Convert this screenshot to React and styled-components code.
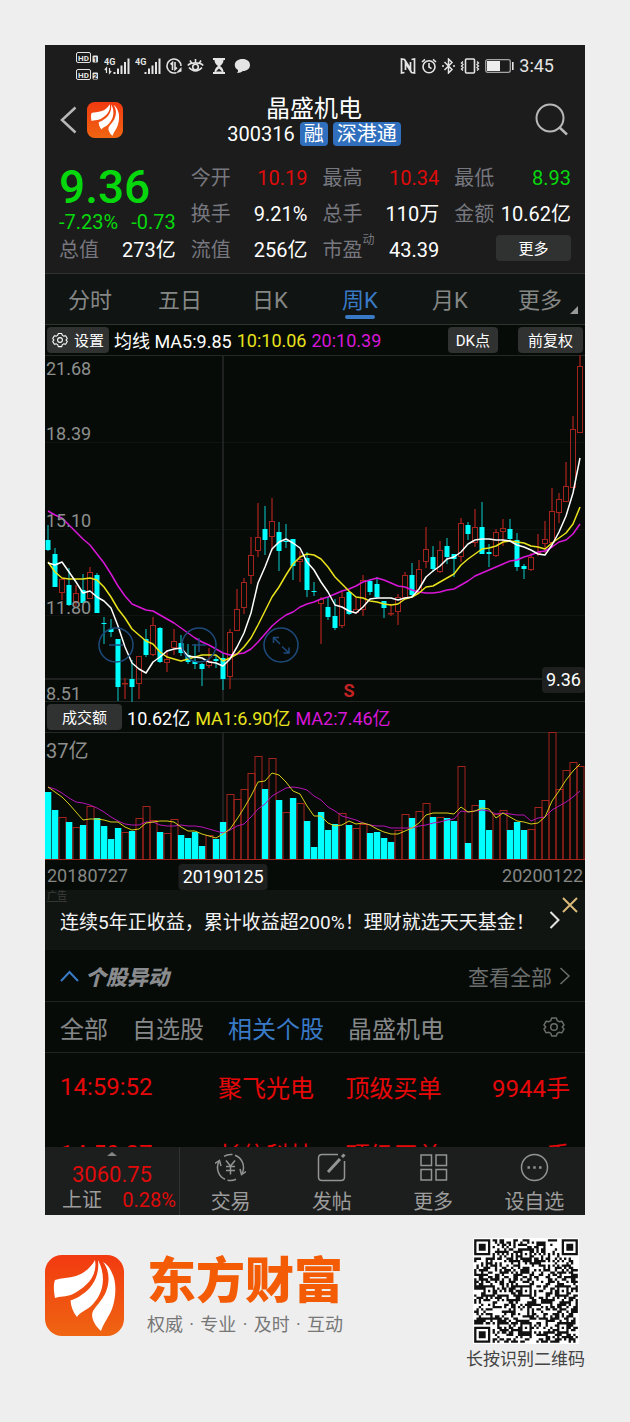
import React from "react";
import styled, { createGlobalStyle } from "styled-components";

const GlobalStyle = createGlobalStyle`
  * {
    box-sizing: border-box;
  }

  body {
    margin: 0;
    background: #eeeeee;
    font-family: Roboto, "Noto Sans CJK SC", sans-serif;
  }

  button {
    padding: 0;
    border: none;
    background: none;
    color: inherit;
    font-family: inherit;
    cursor: pointer;
  }

  a {
    color: inherit;
    text-decoration: none;
  }

  svg {
    display: block;
    flex: none;
  }
`;

const RED = "#df0b0b";
const GREEN = "#07d80d";
const YELLOW = "#e8e21c";
const MAGENTA = "#d816d8";
const BLUE = "#397ac6";
const UP = "#8f1e19";

const Page = styled.main`
  padding: 45px 45px 0;
`;

const Phone = styled.section`
  background: #070b08;
  color: #ffffff;
  overflow: hidden;
`;

/* ---------- top ---------- */

const StatusBar = styled.div`
  display: flex;
  justify-content: space-between;
  align-items: center;
  height: 41px;
  padding: 0 31px;
  background: #1b1c1b;
  color: #e4e4e4;
  font-size: 18px;
`;

const StatusGroup = styled.div`
  display: flex;
  align-items: center;
  gap: 5px;
`;

const Header = styled.header`
  display: grid;
  grid-template-columns: 1fr auto 1fr;
  align-items: center;
  height: 69px;
  padding: 0 17px 2px 15px;
  background: #1b1c1b;
`;

const HeaderLeft = styled.div`
  display: flex;
  align-items: center;
  gap: 10px;
`;

const TitleBlock = styled.div`
  padding-top: 2px;
  text-align: center;
`;

const Title = styled.h1`
  margin: 0;
  font-size: 24px;
  line-height: 26px;
  font-weight: 400;
`;

const CodeRow = styled.div`
  display: flex;
  align-items: center;
  gap: 5px;
  font-size: 20px;
  line-height: 24px;
`;

const Badge = styled.span`
  padding: 0 4px;
  border-radius: 4px;
  background: #2f6fbe;
`;

const SearchButton = styled.button`
  justify-self: end;
`;

/* ---------- quote ---------- */

const Quote = styled.section`
  display: grid;
  grid-template-columns: 1fr 1fr 1fr 1fr;
  column-gap: 15px;
  padding: 5px 14px;
  border-bottom: 1px solid #303230;
  background: #1b1c1b;
  font-size: 20px;
`;

const QuoteColumn = styled.div`
  display: flex;
  flex-direction: column;
`;

const MainColumn = styled(QuoteColumn)`
  padding-top: 4px;
`;

const Price = styled.strong`
  color: ${GREEN};
  font-size: 46px;
  line-height: 47px;
  font-weight: 500;
`;

const Change = styled.div`
  display: flex;
  justify-content: space-between;
  color: ${GREEN};
  line-height: 22px;
  white-space: nowrap;
`;

const Stat = styled.div`
  display: flex;
  justify-content: space-between;
  line-height: ${(props) => props.$height || 36}px;
  white-space: nowrap;
`;

const StatLabel = styled.span`
  position: relative;
  color: #77777f;
`;

const StatNote = styled.small`
  position: absolute;
  left: 100%;
  top: 0;
  font-size: 12px;
  line-height: 16px;
`;

const StatValue = styled.span`
  color: ${(props) => props.$color || "#ffffff"};
`;

const Chip = styled.button`
  display: flex;
  align-items: center;
  justify-content: center;
  gap: 6px;
  height: 26px;
  padding: 0 ${(props) => props.$pad || 5}px 1px;
  border-radius: 4px;
  background: #303131;
  color: #ffffff;
  font-size: 15px;
  white-space: nowrap;
`;

const MoreChip = styled(Chip)`
  align-self: flex-end;
  width: 75px;
  margin-top: 3px;
`;

/* ---------- period tabs ---------- */

const PeriodTabs = styled.nav`
  display: flex;
  height: 51px;
  border-bottom: 1px solid #303230;
  background: #101412;
`;

const PeriodTab = styled.button`
  position: relative;
  flex: 1;
  padding-bottom: 2px;
  color: ${(props) => (props.$active ? BLUE : "#858785")};
  font-size: 22px;

  &::after {
    content: "";
    display: ${(props) => (props.$active ? "block" : "none")};
    position: absolute;
    left: 50%;
    bottom: 5px;
    width: 30px;
    height: 4px;
    margin-left: -15px;
    border-radius: 2px;
    background: ${BLUE};
  }
`;

const Corner = styled.i`
  position: absolute;
  right: 7px;
  bottom: 10px;
  border-left: 8px solid transparent;
  border-bottom: 8px solid #9a9a9a;
`;

/* ---------- charts ---------- */

const Legend = styled.div`
  display: flex;
  align-items: center;
  gap: 5px;
  height: 30px;
  padding: 0 2px;
  font-size: 18px;
  white-space: nowrap;
`;

const LegendItem = styled.span`
  color: ${(props) => props.$color || "#ffffff"};
`;

const LegendActions = styled.div`
  display: flex;
  gap: 20px;
  margin-left: auto;
`;

const ChartPanel = styled.div`
  position: relative;
`;

const ChartSvg = styled.svg`
  width: 100%;
  height: auto;
`;

const ChartTool = styled.button`
  position: absolute;
  left: ${(props) => props.$left}%;
  top: 78.5%;
`;

const Tag = styled.span`
  position: absolute;
  padding: 0 4px;
  border-radius: 4px;
  background: #1e201f;
  color: #ffffff;
  font-size: 18px;
  line-height: 26px;
`;

const PriceTag = styled(Tag)`
  right: 0;
  top: 90%;
`;

const DateTag = styled(Tag)`
  left: 33%;
  top: 4px;
  transform: translateX(-50%);
`;

const Dates = styled.div`
  position: relative;
  display: flex;
  justify-content: space-between;
  height: 30px;
  padding: 0 2px;
  color: #848684;
  font-size: 18px;
  line-height: 32px;
`;

/* ---------- ad ---------- */

const Ad = styled.aside`
  position: relative;
  display: flex;
  align-items: center;
  justify-content: space-between;
  height: 60px;
  padding: 0 25px 0 15px;
  background: #111512;
`;

const AdLink = styled.a`
  color: #f4f4f4;
  font-size: 19px;
  white-space: nowrap;
`;

const AdMark = styled.small`
  position: absolute;
  left: 2px;
  top: 0;
  border-bottom: 1px solid #333633;
  color: #3b3e3b;
  font-size: 10px;
  line-height: 11px;
`;

const AdClose = styled.button`
  position: absolute;
  right: 7px;
  top: 7px;
`;

/* ---------- moves ---------- */

const MovesHeader = styled.div`
  display: flex;
  align-items: center;
  justify-content: space-between;
  height: 52px;
  padding: 0 14px 0 15px;
  border-bottom: 1px solid #1f2321;
`;

const MovesTitle = styled.h2`
  display: flex;
  align-items: center;
  gap: 6px;
  margin: 0;
  color: #8a8b8e;
  font-size: 21px;
  font-style: italic;
  font-weight: 900;
`;

const AllLink = styled.a`
  display: flex;
  align-items: center;
  gap: 7px;
  color: #6c6e6d;
  font-size: 21px;
`;

const Filters = styled.div`
  display: flex;
  align-items: center;
  gap: 24px;
  height: 51px;
  padding: 0 20px 0 15px;
  border-bottom: 1px solid #1f2321;
`;

const Filter = styled.button`
  color: ${(props) => (props.$active ? BLUE : "#858789")};
  font-size: 24px;
`;

const GearButton = styled.button`
  margin-left: auto;
`;

const MovesList = styled.div`
  height: 94px;
  padding: 0 15px;
  overflow: hidden;
`;

const MovesTable = styled.table`
  width: 100%;
  table-layout: fixed;
  border-collapse: collapse;
  color: #e60808;
  font-size: 24px;
`;

const Cell = styled.td`
  width: ${(props) => props.$width}%;
  height: 67px;
  padding: 0;
  text-align: ${(props) => (props.$right ? "right" : "left")};
  white-space: nowrap;
`;

/* ---------- bottom bar ---------- */

const BottomBar = styled.nav`
  display: flex;
  height: 68px;
  background: #1c1e1d;
  color: #9c9d9c;
`;

const IndexBox = styled.a`
  position: relative;
  width: 25%;
  padding-top: 16px;
  border-right: 1px solid #303230;
  text-align: center;
`;

const IndexCaret = styled.i`
  position: absolute;
  left: 50%;
  top: 5px;
  margin-left: -5px;
  border: 5px solid transparent;
  border-top: none;
  border-bottom: 4px solid #858785;
`;

const IndexValue = styled.div`
  color: ${RED};
  font-size: 22px;
  line-height: 24px;
`;

const IndexRow = styled.div`
  display: flex;
  justify-content: space-between;
  padding: 0 3px 0 17px;
  font-size: 20px;
  line-height: 26px;
`;

const BarButton = styled.button`
  display: flex;
  flex: 1;
  flex-direction: column;
  align-items: center;
  padding-top: 5px;
  font-size: 20px;
  line-height: 38px;
`;

/* ---------- footer ---------- */

const Footer = styled.footer`
  display: flex;
  align-items: flex-start;
  justify-content: space-between;
  padding: 23px 0 52px;
`;

const Brand = styled.div`
  display: flex;
  align-items: flex-start;
  gap: 23px;
  padding-top: 17px;
`;

const BrandName = styled.div`
  color: #f35b05;
  font-size: 49px;
  line-height: 54px;
  font-weight: 900;
`;

const Tagline = styled.div`
  display: flex;
  justify-content: space-between;
  padding-top: 3px;
  color: #777777;
  font-size: 18px;
  line-height: 26px;
`;

const QrBlock = styled.div`
  display: flex;
  flex-direction: column;
  align-items: center;
  color: #444444;
  font-size: 17px;
  line-height: 30px;
`;

// step between two bars and the centre of the first one
const STEP = 7;
const FIRST = 3;
const barX = (i) => FIRST + i * STEP;

// r/c, high, low, body top, body bottom
const candles = `
c 170 196 185 195|c 193 232 199 232|r 224 245 224 238|c 213 251 230 250|r 230 251 238 247
c 219 248 235 248|r 212 244 217 244|c 218 258 220 258|c 262 289 268 269|c 264 282 274 277
c 284 346 284 332|r 323 344 328 329|c 305 347 324 332|r 301 344 301 329|c 274 302 284 300
r 262 301 270 300|c 272 308 273 307|r 295 317 304 308|r 274 300 286 293|c 280 301 288 298
c 289 309 300 307|c 289 314 306 309|c 308 331 309 314|r 293 313 306 311|c 300 313 304 306
c 298 335 303 324|r 274 334 277 322|r 234 276 254 276|r 223 259 227 253|r 182 229 200 221
r 148 202 182 196|c 151 200 174 185|r 143 196 166 182|c 167 216 177 196|c 169 193 186 187
c 184 225 184 211|r 196 227 204 207|c 197 242 203 235|c 227 241 236 237|r 242 289 244 249
c 242 265 252 262|c 244 275 261 273|r 237 273 242 271|c 236 260 237 259|r 242 259 254 258
r 220 261 225 255|c 224 240 226 237|c 222 244 229 242|c 246 263 246 253|r 249 261 258 259
r 239 270 242 257|r 217 243 220 243|c 208 242 220 240|r 205 238 214 238|r 172 213 194 207
c 191 217 202 214|r 186 218 195 217|c 183 209 191 202|c 199 222 199 204|r 163 207 168 202
c 167 185 170 179|r 154 192 172 188|c 147 199 172 199|c 189 212 197 199|r 174 202 177 201
r 164 191 173 177|c 164 187 174 184|c 178 216 185 212|c 209 224 211 214|r 198 216 202 215
r 179 201 197 199|r 166 198 184 189|r 133 192 156 188|r 138 168 144 158|r 107 147 131 147
r 61 133 74 133|r 0 78 11 78`
  .trim()
  .split(/[|\n]/)
  .map((row) => {
    const [kind, ...values] = row.split(" ");
    const [high, low, top, bottom] = values.map(Number);
    return { up: kind === "r", high, low, top, bottom };
  });

const ma5 = [
  208, 210, 207, 217, 227, 238, 236, 242, 246, 253, 271, 292, 308, 314, 318, 307, 302, 296, 294, 293,
  301, 302, 303, 307, 308, 311, 304, 292, 278, 258, 228, 212, 194, 187, 184, 188, 193, 207, 215, 227,
  237, 250, 252, 256, 258, 252, 244, 243, 243, 243, 245, 243, 242, 234, 222, 216, 211, 204, 202, 197,
  189, 185, 184, 184, 185, 185, 186, 190, 192, 195, 199, 200, 190, 177, 161, 138, 103,
];

const ma10 = [
  207, 217, 223, 224, 224, 224, 223, 225, 232, 242, 254, 263, 274, 280, 286, 289, 297, 302, 304, 306,
  304, 302, 300, 300, 300, 306, 303, 299, 292, 283, 270, 256, 242, 232, 220, 209, 202, 199, 200, 204,
  212, 222, 229, 236, 242, 243, 246, 247, 249, 250, 249, 244, 242, 238, 232, 231, 227, 223, 219, 210,
  204, 199, 194, 193, 191, 187, 186, 187, 188, 191, 192, 194, 188, 183, 178, 169, 152,
];

const ma20 = [
  156, 160, 163, 170, 177, 184, 190, 199, 208, 219, 231, 241, 249, 252, 255, 256, 260, 264, 268, 273,
  278, 283, 287, 290, 294, 298, 300, 299, 298, 294, 287, 279, 271, 265, 260, 257, 252, 249, 247, 244,
  242, 239, 236, 234, 231, 227, 225, 223, 225, 228, 231, 232, 235, 237, 238, 238, 237, 235, 234, 230,
  226, 221, 218, 215, 212, 209, 206, 205, 202, 200, 197, 196, 192, 187, 185, 179, 169,
];

const volumes = `
c67 c49 r42 c37 r32 c34 r53 c41 c33 c20 c31 r27 c28 r41 r53 r39 c27 r26 r40 c24
c21 c27 c13 r24 c20 c37 r65 r60 r70 r86 r103 c70 r101 c59 r47 c61 r56 c38 c12 c47
c29 c35 r46 c34 r31 r35 c26 c27 c21 c17 r29 r45 c41 r48 r56 c42 r42 c41 c38 r93
c16 r54 c59 c29 r45 r49 c29 c37 c29 r30 r52 r59 r127 r70 r89 r97 r93`
  .trim()
  .split(/\s+/)
  .map((item) => ({ up: item[0] === "r", height: Number(item.slice(1)) }));

const volumeMa1 = [
  55, 60, 65, 72, 80, 88, 87, 87, 88, 90, 90, 95, 98, 97, 91, 90, 89, 89, 90, 95,
  99, 99, 102, 104, 106, 102, 97, 87, 76, 64, 50, 49, 41, 43, 50, 59, 62, 74, 84, 84,
  91, 94, 93, 89, 92, 91, 93, 97, 100, 102, 102, 99, 96, 91, 83, 81, 81, 81, 82, 75,
  80, 79, 76, 77, 86, 81, 85, 89, 90, 92, 91, 85, 69, 59, 48, 39, 32,
];

const volumeMa2 = [
  55, 57, 61, 66, 70, 71, 73, 76, 80, 85, 89, 92, 93, 93, 90, 90, 93, 94, 94, 93,
  94, 94, 95, 97, 99, 101, 98, 94, 92, 85, 77, 72, 64, 60, 56, 55, 56, 58, 64, 68,
  75, 79, 84, 86, 88, 91, 93, 94, 94, 96, 96, 96, 96, 94, 93, 91, 90, 88, 87, 79,
  80, 79, 78, 79, 82, 81, 82, 83, 83, 89, 86, 85, 78, 74, 70, 65, 59,
];

function Line({ values, color, width = 1.5 }) {
  const points = values.map((y, i) => `${barX(i)},${y}`).join(" ");
  return <polyline points={points} fill="none" stroke={color} strokeWidth={width} strokeLinejoin="round" />;
}

function PriceChart() {
  const labels = [
    ["21.68", 20],
    ["18.39", 85],
    ["15.10", 172],
    ["11.80", 259],
    ["8.51", 345],
  ];
  return (
    <ChartSvg viewBox="0 0 540 347" role="img" aria-label="周K">
      {[87, 174, 260].map((y) => (
        <path key={y} d={`M0 ${y + 0.5}H540`} stroke="#0f1411" />
      ))}
      <path d="M0 .5H540M0 346.5H540" stroke="#252926" />
      <path d="M178 0V347M0 324H540" stroke="#272a28" strokeWidth="1.5" />
      {candles.map(({ up, high, low, top, bottom }, i) => {
        const x = barX(i);
        return up ? (
          <g key={i} stroke={UP} fill="none">
            <path d={`M${x} ${high}V${top}M${x} ${bottom}V${low}`} strokeWidth="1.5" />
            <rect x={x - 2.5} y={top + 0.5} width="5" height={Math.max(bottom - top - 1, 0.5)} stroke="#a3231d" />
          </g>
        ) : (
          <g key={i}>
            <path d={`M${x} ${high}V${low}`} stroke="#078f8d" strokeWidth="1.5" />
            <rect x={x - 2.5} y={top} width="5" height={bottom - top} fill="#00ffff" />
          </g>
        );
      })}
      <Line values={ma20} color={MAGENTA} />
      <Line values={ma10} color={YELLOW} />
      <Line values={ma5} color="#ffffff" />
      <g fill="#8d8f8d" fontSize="18">
        {labels.map(([text, y]) => (
          <text key={text} x="1" y={y}>{text}</text>
        ))}
      </g>
      <text x="304" y="342" textAnchor="middle" fill="#c32222" fontSize="18" fontWeight="700">S</text>
    </ChartSvg>
  );
}

function VolumeChart() {
  return (
    <ChartSvg viewBox="0 0 540 128" role="img" aria-label="成交额">
      <path d="M0 .5H540" stroke="#252926" />
      <path d="M178 0V128" stroke="#272a28" strokeWidth="1.5" />
      {volumes.map(({ up, height }, i) => {
        const x = barX(i) - 3.5;
        return up ? (
          <rect key={i} x={x + 0.5} y={127.5 - height} width="7" height={height} fill="none" stroke="#a3231d" />
        ) : (
          <rect key={i} x={x + 0.4} y={127 - height} width="6.4" height={height} fill="#00ffff" />
        );
      })}
      <path d="M0 127.5H540" stroke="#a3231d" />
      <Line values={volumeMa2} color="#b414b4" width={1} />
      <Line values={volumeMa1} color="#d6cd18" width={1} />
      <text x="1" y="26" fill="#8d8f8d" fontSize="20">37亿</text>
    </ChartSvg>
  );
}

function ToolIcon({ children }) {
  return (
    <svg width="36" height="36" viewBox="0 0 36 36" fill="none" stroke="#1d4a7b" strokeWidth="1.5">
      <circle cx="18" cy="18" r="17" />
      {children}
    </svg>
  );
}

function Logo({ width, height }) {
  return (
    <svg width={width} height={height} viewBox="0 0 79 81" preserveAspectRatio="none">
      <defs>
        <linearGradient id="logoFill" x1="0" y1="0" x2="0" y2="1">
          <stop offset="0" stopColor="#f23a10" />
          <stop offset="1" stopColor="#ef6512" />
        </linearGradient>
      </defs>
      <rect width="79" height="81" rx="17" fill="url(#logoFill)" />
      <g fill="#ffffff">
        <path d="M50 5C46 12 40 18 31 21C24 23 16 23 10 25C8 30 9 37 10 43C15 41 21 42 27 39.500C40 33 53 22 50 5Z" />
        <path d="M53 5C55 22 46 34 37 39.500C33 43 29 44 25.500 45.500C26 52 28 57 32 62C35 57 40 56 45 52C56 42 61 28 56 12C55 9 54 7 53 5Z" />
        <path d="M58 7C65 16 65 28 60 39C57 45 51 51 48 56C45 62 50 71 56 76C59 67 64 62 67 54C71 43 72 27 67 18C65 13 62 9 58 7Z" />
      </g>
    </svg>
  );
}

function Chevron({ d, width, height, color, stroke = 2 }) {
  return (
    <svg width={width} height={height} viewBox={`0 0 ${width} ${height}`}>
      <path d={d} fill="none" stroke={color} strokeWidth={stroke} />
    </svg>
  );
}

function Gear({ size, color }) {
  return (
    <svg width={size} height={size} viewBox="0 0 24 24" fill="none" stroke={color} strokeWidth="1.6" strokeLinejoin="round">
      <path d="M9.5 2.2h5l1 2.8 2 1.2 3-.5 2.4 4.1-1.9 2.2v.1l1.9 2.1-2.4 4.2-3-.6-2 1.2-1 2.9h-5l-1-2.9-2-1.2-3 .6-2.4-4.2L3 12l-1.9-2.2 2.4-4.1 3 .5 2-1.2Z" />
      <circle cx="12" cy="12" r="3.6" />
    </svg>
  );
}

function HdIcon() {
  return (
    <svg width="23" height="28" viewBox="0 0 23 28" fontWeight="700">
      {[0, 17].map((y, i) => (
        <g key={y} transform={`translate(0 ${y})`}>
          <rect x=".5" y=".5" width="14" height="10" rx="1.5" fill="none" stroke="#e4e4e4" />
          <text x="2" y="8.500" fontSize="8" fill="#e4e4e4">HD</text>
          <rect x="16.5" y="3.500" width="5.5" height="7" rx="1" fill="#e4e4e4" />
          <text x="17.3" y="9.7" fontSize="7" fill="#1b1c1b">{i + 1}</text>
        </g>
      ))}
    </svg>
  );
}

function SignalIcon({ arrows }) {
  return (
    <svg width="26" height="18" viewBox="0 0 26 18" stroke="#e4e4e4">
      <text x="0" y="8" fontSize="9" fontWeight="700" fill="#e4e4e4" stroke="none">4G</text>
      {arrows && <path d="M2.500 16V11L.8 13M5.500 11V16L7.200 14" fill="none" strokeWidth="1.2" />}
      <path d="M10.500 17V15M14 17V11.500M17.500 17V8.500M21 17V5M24.500 17V1.500" strokeWidth="2" />
    </svg>
  );
}

function StatusLeft() {
  return (
    <StatusGroup>
      <HdIcon />
      <SignalIcon arrows />
      <SignalIcon />
      <svg width="16" height="16" viewBox="0 0 16 16" fill="none" stroke="#e4e4e4" strokeWidth="1.6">
        <path d="M10 14.700A7 7 0 1 1 15 8M6.500 12V4.500L4.500 6.300M9 4V11.500L11 9.700" />
        <path d="M9.500 15.500L15.500 9V13.500Z" fill="#e4e4e4" stroke="none" />
      </svg>
      <svg width="17" height="16" viewBox="0 0 17 16" fill="none" stroke="#e4e4e4" strokeWidth="1.600">
        <path d="M.8 7.500C4 4 13 4 16.200 7.500M2 9.500Q8.500 16.500 15 9.500M8.500 4.500V1M4.500 5L3 2.500M12.500 5L14 2.500" />
        <circle cx="8.500" cy="9" r="2.800" />
      </svg>
      <svg width="20" height="16" viewBox="0 0 20 16">
        <path d="M4 0H16V2H4ZM4 14H16V16H4ZM5.500 2H14.500Q14.500 5.500 11 8Q14.500 10.500 14.500 14H5.500Q5.500 10.500 9 8Q5.500 5.500 5.500 2Z" fill="#e4e4e4" />
        <path d="M7 13.500L10 10.500L13 13.500Z" fill="#1b1c1b" />
      </svg>
      <svg width="17" height="16" viewBox="0 0 17 16">
        <path d="M8.500 1C13 1 16 3.500 16 7S13 13 9 13C7.500 14 5.500 15 3 15Q4.500 13.500 4 12C2 11 .8 9.200 .8 7C.8 3.500 4 1 8.500 1Z" fill="#e4e4e4" />
      </svg>
    </StatusGroup>
  );
}

function StatusRight() {
  return (
    <StatusGroup>
      <svg width="16" height="16" viewBox="0 0 16 16" fill="none" stroke="#e4e4e4" strokeWidth="1.700">
        <path d="M4.500 14.500L1.500 15V1L4.500 1.500L10.500 11V4" />
        <path d="M11.500 1.500L14.500 1V15L11.500 14.500L5.500 5V12" />
      </svg>
      <svg width="16" height="16" viewBox="0 0 16 16" fill="none" stroke="#e4e4e4" strokeWidth="1.600">
        <circle cx="8" cy="8.700" r="6" />
        <path d="M8 5V9L10.500 10.700M1 4L4 1.300M15 4L12 1.300" />
      </svg>
      <svg width="13" height="16" viewBox="0 0 13 16" fill="none" stroke="#e4e4e4" strokeWidth="1.500">
        <path d="M2.500 4L10 11.500L6.500 15V1L10 4.500L2.500 12M0 8H2M11 8H13" />
      </svg>
      <svg width="20" height="16" viewBox="0 0 20 16" fill="none" stroke="#e4e4e4" strokeWidth="1.600">
        <rect x="5.500" y="1" width="9" height="14" rx="1" />
        <path d="M3 3.500L1.500 5L3 6.500L1.500 8L3 9.500L1.500 11L3 12.500M17 3.500L18.500 5L17 6.500L18.500 8L17 9.500L18.500 11L17 12.500" strokeWidth="1.400" />
      </svg>
      <svg width="29" height="14" viewBox="0 0 29 14">
        <rect x=".7" y=".7" width="24.600" height="12.600" rx="2" fill="none" stroke="#a5a5a5" strokeWidth="1.300" />
        <rect x="2" y="2" width="13" height="10" fill="#ededed" />
        <rect x="27" y="3" width="1.600" height="8" fill="#e4e4e4" />
      </svg>
      3:45
    </StatusGroup>
  );
}

// 45 x 45 code: finder, timing and alignment patterns over a fixed noise
const QR_SIZE = 45;

function ringDark(dx, dy, half) {
  const d = Math.max(Math.abs(dx), Math.abs(dy));
  return half === 3 ? d !== 2 && d !== 4 : d !== 1;
}

function qrPath() {
  const finders = [[3, 3], [QR_SIZE - 4, 3], [3, QR_SIZE - 4]];
  const alignments = [[22, 6], [6, 22], [22, 22], [38, 22], [22, 38], [38, 38]];
  let seed = 20190125;
  let d = "";
  for (let y = 0; y < QR_SIZE; y += 1) {
    for (let x = 0; x < QR_SIZE; x += 1) {
      seed = (seed * 1103515245 + 12345) % 2147483648;
      let dark = seed / 2147483648 > 0.5;
      if (x === 6 || y === 6) dark = (x + y) % 2 === 0;
      alignments.forEach(([cx, cy]) => {
        if (Math.abs(x - cx) <= 2 && Math.abs(y - cy) <= 2) dark = ringDark(x - cx, y - cy, 2);
      });
      finders.forEach(([cx, cy]) => {
        if (Math.abs(x - cx) <= 4 && Math.abs(y - cy) <= 4) dark = ringDark(x - cx, y - cy, 3);
      });
      if (dark) d += `M${x} ${y}h1v1h-1z`;
    }
  }
  return d;
}

function QrCode() {
  return (
    <svg width="106" height="106" viewBox="-0.500 -0.500 46 46">
      <rect x="-1" y="-1" width="48" height="48" fill="#ffffff" />
      <path d={qrPath()} fill="#111111" />
    </svg>
  );
}

const quoteColumns = [
  [
    { label: "今开", value: "10.19", color: RED },
    { label: "换手", value: "9.21%" },
    { label: "流值", value: "256亿" },
  ],
  [
    { label: "最高", value: "10.34", color: RED },
    { label: "总手", value: "110万" },
    { label: "市盈", value: "43.39", note: "动" },
  ],
  [
    { label: "最低", value: "8.93", color: GREEN },
    { label: "金额", value: "10.62亿" },
  ],
];

const periods = ["分时", "五日", "日K", "周K", "月K", "更多"];
const filters = ["全部", "自选股", "相关个股", "晶盛机电"];

const moves = [
  ["14:59:52", "聚飞光电", "顶级买单", "9944手"],
  ["14:59:27", "长信科技", "顶级买单", "10000手"],
];

const barItems = [
  {
    label: "交易",
    icon: (
      <>
        <path d="M4 9.500A13 13 0 0 0 10 27.300M12.500 28.200A13 13 0 0 0 21 27.300M27 21.500A13 13 0 0 0 20 3.300M17.500 2.600A13 13 0 0 0 9 4.300" />
        <path d="M0 11.500L4.500 8.500L6 14M31 19.500L26.500 22.500L25 17" />
        <path d="M11 8.500L15.500 14L20 8.500M15.500 14V22.500M11 14.500H20M11 18.500H20" />
      </>
    ),
  },
  {
    label: "发帖",
    icon: (
      <>
        <path d="M22 2.500H6Q2.500 2.500 2.500 6V25Q2.500 28.500 6 28.500H25Q28.500 28.500 28.500 25V9" />
        <path d="M12 20L24 7" strokeWidth="3" />
        <path d="M26 5L28.500 2.500" strokeWidth="3" />
      </>
    ),
  },
  {
    label: "更多",
    icon: (
      <>
        <rect x="3" y="3" width="10.500" height="10.500" />
        <rect x="18" y="3" width="10.500" height="10.500" />
        <rect x="3" y="17.500" width="10.500" height="10.500" />
        <rect x="18" y="17.500" width="10.500" height="10.500" />
      </>
    ),
  },
  {
    label: "设自选",
    icon: (
      <>
        <circle cx="15.500" cy="15.500" r="13" />
        <path d="M8.500 15.500h2.400M14.300 15.500h2.400M20.100 15.500h2.400" strokeWidth="2.400" />
      </>
    ),
  },
];

function StatItem({ item, height }) {
  return (
    <Stat $height={height}>
      <StatLabel>
        {item.label}
        {item.note && <StatNote>{item.note}</StatNote>}
      </StatLabel>
      <StatValue $color={item.color}>{item.value}</StatValue>
    </Stat>
  );
}

function QuotePanel() {
  return (
    <Quote>
      <MainColumn>
        <Price>9.36</Price>
        <Change>
          <span>-7.23%</span>
          <span>-0.73</span>
        </Change>
        <StatItem item={{ label: "总值", value: "273亿" }} height={34} />
      </MainColumn>
      {quoteColumns.map((column, i) => (
        <QuoteColumn key={column[0].label}>
          {column.map((item) => (
            <StatItem key={item.label} item={item} />
          ))}
          {i === 2 && <MoreChip>更多</MoreChip>}
        </QuoteColumn>
      ))}
    </Quote>
  );
}

function Charts() {
  return (
    <>
      <Legend>
        <Chip>
          <Gear size={16} color="#ffffff" />
          设置
        </Chip>
        <LegendItem>均线 MA5:9.85</LegendItem>
        <LegendItem $color={YELLOW}>10:10.06</LegendItem>
        <LegendItem $color={MAGENTA}>20:10.39</LegendItem>
        <LegendActions>
          <Chip $pad={8}>DK点</Chip>
          <Chip $pad={10}>前复权</Chip>
        </LegendActions>
      </Legend>
      <ChartPanel>
        <PriceChart />
        <ChartTool $left={9.9} aria-label="缩小">
          <ToolIcon>
            <path d="M11 18H25" />
          </ToolIcon>
        </ChartTool>
        <ChartTool $left={25.2} aria-label="放大">
          <ToolIcon>
            <path d="M11 18H25M18 11V25" />
          </ToolIcon>
        </ChartTool>
        <ChartTool $left={40.4} aria-label="全屏">
          <ToolIcon>
            <path d="M17 17L10.500 10.500M10.500 16V10.500H16M19 19.500L26 26M26 20.500V26H20.500" />
          </ToolIcon>
        </ChartTool>
        <PriceTag>9.36</PriceTag>
      </ChartPanel>
      <Legend>
        <Chip $pad={15}>成交额</Chip>
        <LegendItem>10.62亿</LegendItem>
        <LegendItem $color={YELLOW}>MA1:6.90亿</LegendItem>
        <LegendItem $color={MAGENTA}>MA2:7.46亿</LegendItem>
      </Legend>
      <VolumeChart />
      <Dates>
        <span>20180727</span>
        <DateTag>20190125</DateTag>
        <span>20200122</span>
      </Dates>
    </>
  );
}

function Moves() {
  return (
    <section>
      <MovesHeader>
        <MovesTitle>
          <Chevron width={19} height={12} d="M1 11L9.500 2L18 11" color={BLUE} />
          个股异动
        </MovesTitle>
        <AllLink href="#">
          查看全部
          <Chevron width={12} height={18} d="M1.500 1L10 9L1.500 17" color="#6c6e6d" stroke={1.5} />
        </AllLink>
      </MovesHeader>
      <Filters>
        {filters.map((name) => (
          <Filter key={name} $active={name === "相关个股"}>{name}</Filter>
        ))}
        <GearButton aria-label="设置">
          <Gear size={22} color="#6c6e6d" />
        </GearButton>
      </Filters>
      <MovesList>
        <MovesTable>
          <tbody>
            {moves.map(([time, name, type, amount]) => (
              <tr key={time}>
                <Cell $width={31}>{time}</Cell>
                <Cell $width={25}>{name}</Cell>
                <Cell $width={22}>{type}</Cell>
                <Cell $width={22} $right>{amount}</Cell>
              </tr>
            ))}
          </tbody>
        </MovesTable>
      </MovesList>
    </section>
  );
}

function App() {
  return (
    <Page>
      <GlobalStyle />
      <Phone>
        <StatusBar>
          <StatusLeft />
          <StatusRight />
        </StatusBar>
        <Header>
          <HeaderLeft>
            <button aria-label="返回">
              <Chevron width={17} height={28} d="M15.500 1.500L2 14L15.500 26.500" color="#b8b8b8" stroke={2.5} />
            </button>
            <Logo width={36} height={36} />
          </HeaderLeft>
          <TitleBlock>
            <Title>晶盛机电</Title>
            <CodeRow>
              300316
              <Badge>融</Badge>
              <Badge>深港通</Badge>
            </CodeRow>
          </TitleBlock>
          <SearchButton aria-label="搜索">
            <svg width="33" height="33" viewBox="0 0 33 33" fill="none" stroke="#b8b8b8" strokeWidth="2">
              <circle cx="15" cy="15" r="13.500" />
              <path d="M24 24L32 31.500" strokeWidth="2.500" />
            </svg>
          </SearchButton>
        </Header>
        <QuotePanel />
        <PeriodTabs>
          {periods.map((name) => (
            <PeriodTab key={name} $active={name === "周K"}>
              {name}
              {name === "更多" && <Corner />}
            </PeriodTab>
          ))}
        </PeriodTabs>
        <Charts />
        <Ad>
          <AdMark>广告</AdMark>
          <AdLink href="#">连续5年正收益，累计收益超200%！理财就选天天基金！</AdLink>
          <Chevron width={11} height={18} d="M1.500 1L9.500 9L1.500 17" color="#e4e4e4" />
          <AdClose aria-label="关闭">
            <Chevron width={16} height={16} d="M1 1L15 15M15 1L1 15" color="#d9b979" />
          </AdClose>
        </Ad>
        <Moves />
        <BottomBar>
          <IndexBox href="#">
            <IndexCaret />
            <IndexValue>3060.75</IndexValue>
            <IndexRow>
              上证
              <StatValue $color={RED}>0.28%</StatValue>
            </IndexRow>
          </IndexBox>
          {barItems.map(({ label, icon }) => (
            <BarButton key={label}>
              <svg width="31" height="31" viewBox="0 0 31 31" fill="none" stroke="#929392" strokeWidth="1.500">
                {icon}
              </svg>
              {label}
            </BarButton>
          ))}
        </BottomBar>
      </Phone>
      <Footer>
        <Brand>
          <Logo width={79} height={81} />
          <div>
            <BrandName>东方财富</BrandName>
            <Tagline>
              <span>权威</span>
              <span>·</span>
              <span>专业</span>
              <span>·</span>
              <span>及时</span>
              <span>·</span>
              <span>互动</span>
            </Tagline>
          </div>
        </Brand>
        <QrBlock>
          <QrCode />
          长按识别二维码
        </QrBlock>
      </Footer>
    </Page>
  );
}

export default App;
